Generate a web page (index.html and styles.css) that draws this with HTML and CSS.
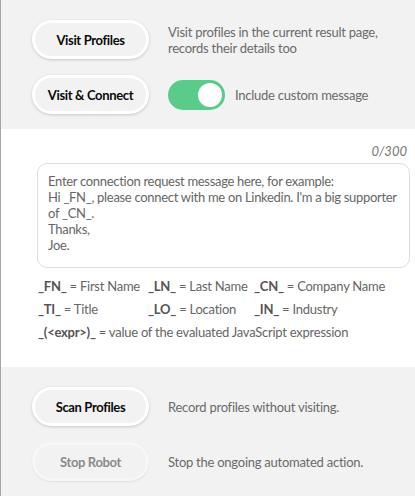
FILE: index.html
```html
<!DOCTYPE html>
<html>
<head>
<meta charset="utf-8">
<link rel="stylesheet" href="styles.css">
</head>
<body>
<div class="panel">
  <section class="block block-top">
    <div class="row">
      <button class="pill">Visit Profiles</button>
      <p class="desc">Visit profiles in the current result page, records their details too</p>
    </div>
    <div class="row">
      <button class="pill">Visit &amp; Connect</button>
      <div class="toggle-wrap">
        <span class="toggle"><span class="knob"></span></span>
        <span class="desc">Include custom message</span>
      </div>
    </div>
  </section>
  <section class="block block-msg">
    <div class="counter">0/300</div>
    <textarea class="msg" placeholder="Enter connection request message here, for example:&#10;Hi _FN_, please connect with me on Linkedin. I'm a big supporter of _CN_.&#10;Thanks,&#10;Joe."></textarea>
    <div class="legend">
      <span><b>_FN_</b> = First Name</span>
      <span><b>_LN_</b> = Last Name</span>
      <span><b>_CN_</b> = Company Name</span>
      <span><b>_TI_</b> = Title</span>
      <span><b>_LO_</b> = Location</span>
      <span><b>_IN_</b> = Industry</span>
      <span class="wide"><b>_(&lt;expr&gt;)_</b> = value of the evaluated JavaScript expression</span>
    </div>
  </section>
  <section class="block block-bottom">
    <div class="row">
      <button class="pill">Scan Profiles</button>
      <p class="desc">Record profiles without visiting.</p>
    </div>
    <div class="row">
      <button class="pill disabled">Stop Robot</button>
      <p class="desc">Stop the ongoing automated action.</p>
    </div>
  </section>
</div>
</body>
</html>
```

FILE: styles.css
```css
html, body {
  margin: 0;
  padding: 0;
  height: 100%;
}
body {
  background: #f2f2f2;
  font-family: "Lato", "Open Sans", sans-serif;
  color: #666;
}
.panel {
  border-left: 1px solid #a6a6a6;
  min-height: 100%;
  box-sizing: border-box;
}
.block {
  display: flex;
  flex-direction: column;
}
.block-top {
  padding: 20px 8px 15px 31px;
  gap: 16px;
}
.block-bottom {
  padding: 20px 8px 18px 31px;
  gap: 16px;
}
.row {
  display: flex;
  align-items: center;
  gap: 19px;
}
.pill {
  width: 117px;
  height: 39px;
  flex: none;
  border-radius: 20px;
  border: 3px solid #fff;
  background: #f2f2f2;
  box-shadow: 0 1px 3px rgba(0,0,0,0.18);
  font-family: "Lato", sans-serif;
  font-weight: 700;
  font-size: 13px;
  letter-spacing: -0.35px;
  color: #0a0a0a;
  padding: 0;
  cursor: pointer;
}
.pill.disabled {
  color: #8a8a8a;
  border-color: #f7f7f7;
  box-shadow: 0 1px 2px rgba(0,0,0,0.08);
}
.desc {
  margin: 0;
  font-size: 13px;
  letter-spacing: -0.25px;
  line-height: 16px;
  color: #6a6a6a;
}
.toggle-wrap {
  display: flex;
  align-items: center;
  gap: 10px;
}
.toggle {
  width: 57px;
  height: 30px;
  border-radius: 15px;
  background: #5bcb8a;
  display: flex;
  align-items: center;
  justify-content: flex-end;
  padding: 0 3px;
  box-sizing: border-box;
}
.knob {
  width: 24px;
  height: 24px;
  border-radius: 50%;
  background: #fff;
}
.block-msg {
  background: #fff;
  padding: 14px 5px 27px 36px;
}
.counter {
  text-align: right;
  font-style: italic;
  font-size: 13px;
  line-height: 16px;
  color: #777;
  padding-right: 3px;
  margin-bottom: 4px;
}
.msg {
  display: block;
  width: 100%;
  height: 105px;
  box-sizing: border-box;
  border: 1px solid #ddd;
  border-radius: 10px;
  padding: 9px 4px 9px 10px;
  resize: none;
  font-family: "Lato", sans-serif;
  font-size: 13px;
  letter-spacing: -0.3px;
  line-height: 16px;
  color: #555;
  background: #fff;
  outline: none;
  overflow: hidden;
}
.msg::placeholder {
  color: #666;
  opacity: 1;
}
.legend {
  display: grid;
  grid-template-columns: 110px 106px auto;
  row-gap: 7px;
  margin-top: 10px;
  font-size: 13px;
  letter-spacing: -0.25px;
  line-height: 16px;
  color: #666;
  padding-left: 1px;
}
.legend b {
  color: #555;
}
.legend .wide {
  grid-column: 1 / -1;
}
```
